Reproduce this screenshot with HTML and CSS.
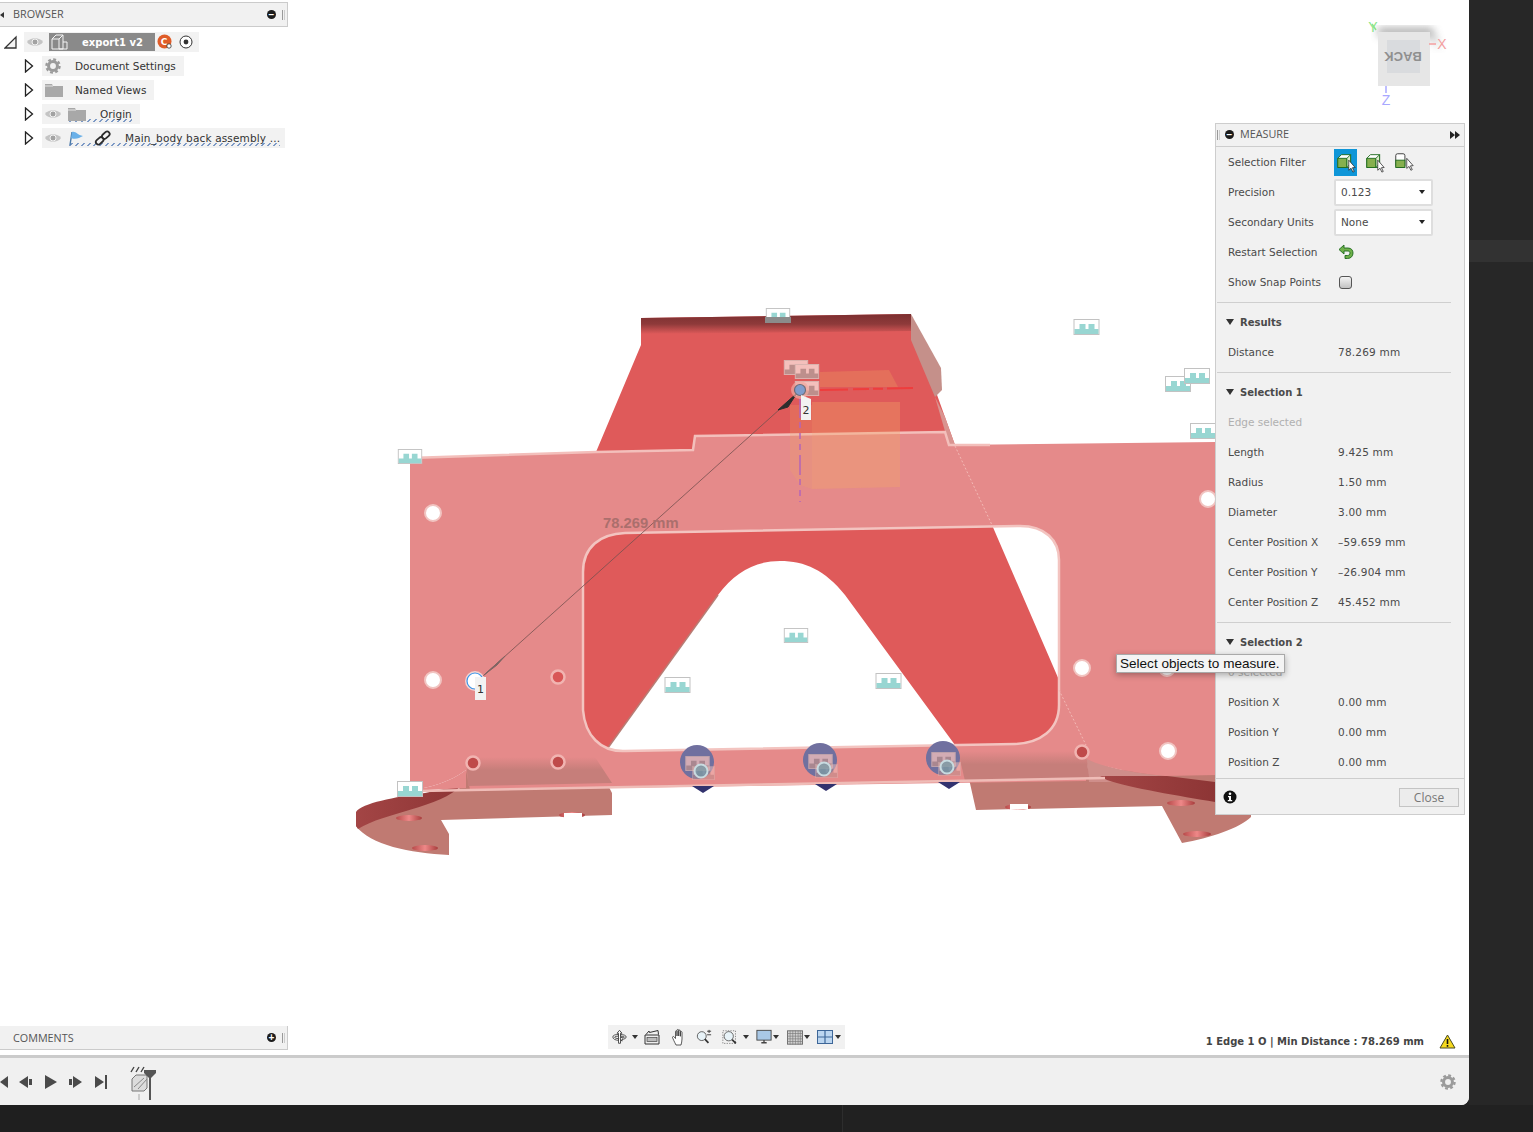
FILE: index.html
```html
<!DOCTYPE html>
<html lang="en">
<head>
<meta charset="UTF-8">
<meta name="viewport" content="width=device-width, initial-scale=1.0">
<title>Measure</title>
<link rel="stylesheet" href="styles.css">
</head>
<body>

<svg class="defs" width="0" height="0">
  <symbol id="comb" viewBox="0 0 26 16">
    <rect x="0.500" y="0.500" width="25" height="15" fill="#fff" stroke="#c2c2c2"/>
    <path d="M1 15V10H6V5H12V10H15V5H21V10H25V15Z" fill="#98d6d2"/>
  </symbol>
  <symbol id="comb-dim" viewBox="0 0 26 16">
    <rect x="0.500" y="0.500" width="25" height="15" fill="#f4c0bc" stroke="#d9b4b0"/>
    <path d="M1 15V10H6V5H12V10H15V5H21V10H25V15Z" fill="#bd8f8c"/>
  </symbol>
  <symbol id="eye" viewBox="1 1 16 10">
    <path d="M1 6C4 1 14 1 17 6C14 11 4 11 1 6Z" fill="#c4c4c4"/>
    <circle cx="9" cy="6" r="3" fill="#a2a2a2" stroke="#f2f2f2"/>
  </symbol>
  <symbol id="caret" viewBox="0 0 10 14">
    <path d="M1.500 1L8.500 7L1.500 13Z" fill="#fff" stroke="#222" stroke-width="1.300"/>
  </symbol>
  <symbol id="gear" viewBox="0 0 18 18">
    <circle cx="9" cy="9" r="5" fill="none" stroke="#9b9b9b" stroke-width="3.400"/>
    <circle cx="9" cy="9" r="7.400" fill="none" stroke="#9b9b9b" stroke-width="2.600" stroke-dasharray="3.200 2.610"/>
  </symbol>
  <symbol id="folder" viewBox="0 0 18 14">
    <path d="M0 1H7L8 3H18V14H0Z" fill="#a8a8a8"/>
    <path d="M0 3H8" stroke="#e4e4e4"/>
  </symbol>
  <symbol id="pick-cube" viewBox="0 0 24 24">
    <path d="M3 8L7 4H17V18H3Z" fill="#fff" stroke="#1f6b1f"/>
    <path d="M3 8H13V18H3Z" fill="#86b04e" stroke="#1f6b1f"/>
    <path d="M13 8L17 4V14L13 18Z" fill="#dfeccb" stroke="#1f6b1f"/>
    <path d="M15 10V21L17.500 18.800L19.500 23L21 22.300L19 18.200L22 18Z" fill="#fff" stroke="#222" stroke-width=".8"/>
  </symbol>
</svg>

<div class="desk">
  <div class="app">
    <div class="viewport">

      <svg class="model" width="1469" height="1055" viewBox="0 0 1469 1055">
        <defs>
          <linearGradient id="roll" x1="0" y1="0" x2="0" y2="1">
            <stop offset="0" stop-color="#7c2f30"/>
            <stop offset=".5" stop-color="#8e3a3a"/>
            <stop offset="1" stop-color="#df5a5a"/>
          </linearGradient>
          <linearGradient id="bend" x1="0" y1="0" x2="0" y2="1">
            <stop offset="0" stop-color="#e58a8a"/>
            <stop offset=".45" stop-color="#c67e7a"/>
            <stop offset="1" stop-color="#c67e7a"/>
          </linearGradient>
          <linearGradient id="bolt" x1="0" y1="0" x2="1" y2="0">
            <stop offset="0" stop-color="#b84a4a"/>
            <stop offset=".5" stop-color="#e88"/>
            <stop offset="1" stop-color="#a83c3c"/>
          </linearGradient>
          <linearGradient id="band" x1="0" y1="0" x2="1" y2="0">
            <stop offset="0" stop-color="#a34545"/>
            <stop offset="1" stop-color="#8d3535"/>
          </linearGradient>
          <filter id="soft"><feGaussianBlur stdDeviation="4"/></filter>
          <filter id="fine"><feGaussianBlur stdDeviation=".5"/></filter>
        </defs>

        <!-- feet -->
        <path d="M356 826C370 845 410 853 449 855V834L441 820L612 815V793L595 760H466V785C440 800 380 805 356 826Z" fill="#c07a72"/>
        <path d="M356 812C362 803 395 797 425 793L462 785C440 808 385 812 358 829L356 826Z" fill="url(#band)"/>
        <path d="M967 770L976 810L1162 806L1182 843C1210 838 1240 828 1251 817V805L1215 790V770Z" fill="#c07a72"/>
        <path d="M1086 755C1095 765 1125 772 1165 776L1107 782H1089Z" fill="#cf8e8a"/>
        <path d="M1100 776H1167L1215 782V802C1180 796 1130 788 1107 780Z" fill="url(#band)"/>
        <g fill="url(#bolt)">
          <ellipse cx="409" cy="818" rx="13" ry="3"/>
          <ellipse cx="425" cy="848" rx="13" ry="3"/>
          <ellipse cx="1181" cy="803" rx="14" ry="3"/>
          <ellipse cx="1197" cy="834" rx="14" ry="3"/>
          <ellipse cx="572" cy="815" rx="13" ry="3"/>
          <ellipse cx="1018" cy="807" rx="13" ry="3"/>
        </g>
        <path d="M564 819V813H582V818Z" fill="#fff"/>
        <path d="M1010 810V804H1028V809Z" fill="#fff"/>

        <!-- back wall -->
        <path d="M641 318L911 314V331L936 392L955 445L992 525L1059 680V745H955L845 595C825 570 805 561 780 561C755 561 735 572 718 595L605 752H584V560L596 452L641 345Z" fill="#df5a5a"/>
        <path d="M641 318L911 314V331L641 334Z" fill="url(#roll)"/>
        <path d="M911 314L941 368L942 390L935 397L911 340Z" fill="#c5908a"/>
        <path d="M935 397L945 417L955 445L949 445Z" fill="#d99490"/>
        <path d="M605 752L718 595" stroke="#b87c74" stroke-width="1.500" fill="none"/>

        <!-- front plate -->
        <path fill-rule="evenodd" fill="#e58a8a" d="M410 458L596 452L693 450L695 436L945 432L949 445L1215 442V775L1165 776C1125 772 1095 765 1086 758V781L470 790L466 770C450 782 430 788 410 790ZM583 572C583 547 600 534 625 533L1020 526C1045 526 1059 540 1059 560V705C1059 730 1040 743 1015 744L625 751C600 752 585 735 583 710Z"/>
        <path d="M466 757H595L612 783L468 786Z" fill="url(#bend)"/>
        <path d="M958 751H1086L1089 778L965 781Z" fill="url(#bend)"/>
        <path d="M466 770C450 782 430 788 410 790V791L466 788Z" fill="#e58a8a"/>
        <path d="M420 791L1105 778" stroke="#efbcb7" stroke-width="2.500" fill="none"/>
        <path d="M410 458L596 452L693 450L695 436L945 432L949 445H990" stroke="#f3bfbb" stroke-width="2.500" fill="none"/>
        <path d="M583 572C583 547 600 534 625 533L1020 526C1045 526 1059 540 1059 560V705C1059 730 1040 743 1015 744L625 751C600 752 585 735 583 710Z" stroke="#f3c4c0" stroke-width="2.500" fill="none"/>
        <path d="M955 446L992 525M1059 690L1086 745" stroke="#f3b9b5" stroke-width="1" stroke-dasharray="2 2" fill="none"/>

        <!-- plate holes -->
        <g fill="#fff" stroke="#f1c4c1" stroke-width="2">
          <ellipse cx="433" cy="513" rx="8" ry="8"/>
          <ellipse cx="433" cy="680" rx="8" ry="8"/>
          <ellipse cx="1208" cy="499" rx="8" ry="8"/>
          <ellipse cx="1082" cy="668" rx="8" ry="8"/>
          <ellipse cx="1168" cy="751" rx="8" ry="8"/>
          <ellipse cx="1167" cy="668" rx="8" ry="8"/>
        </g>
        <g fill="#d95757" stroke="#f1b4b1" stroke-width="2.500">
          <circle cx="558" cy="677" r="6.500"/>
          <circle cx="473" cy="763" r="6.500" fill="#bf4a4a"/>
          <circle cx="558" cy="762" r="6.500" fill="#bf4a4a"/>
          <circle cx="1082" cy="752" r="6.500" fill="#bf4a4a"/>
        </g>

        <!-- helper box -->
        <path d="M820 372L889 370L898 387L820 387Z" fill="#ef9a5c" opacity=".32"/>
        <path d="M812 402H900V487L812 489Z" fill="#f3a766" opacity=".35"/>
        <path d="M790 405H812V489L800 485L790 470Z" fill="#f3a766" opacity=".22"/>
        <path d="M820 390L913 388" stroke="#ee3d3d" stroke-width="2" stroke-dasharray="28 5 16 4 10 4" fill="none"/>
        <path d="M800 398V502" stroke="#b364b8" stroke-width="2" stroke-dasharray="20 4 6 5 6 5 6 5" fill="none" opacity=".75"/>

        <!-- bolts -->
        <g>
          <path d="M692 786H714L703 793Z" fill="#32326e"/>
          <path d="M815 784H837L826 791Z" fill="#32326e"/>
          <path d="M938 782H960L949 789Z" fill="#32326e"/>
          <circle cx="697" cy="762" r="17" fill="#70709f"/>
          <circle cx="820" cy="760" r="17" fill="#70709f"/>
          <circle cx="943" cy="758" r="17" fill="#70709f"/>
          <use href="#comb-dim" x="685" y="756" width="25" height="15" opacity=".75"/>
          <use href="#comb-dim" x="808" y="754" width="25" height="15" opacity=".75"/>
          <use href="#comb-dim" x="931" y="752" width="25" height="15" opacity=".75"/>
          <use href="#comb-dim" x="691" y="766" width="25" height="14" opacity=".5"/>
          <use href="#comb-dim" x="814" y="764" width="25" height="14" opacity=".5"/>
          <use href="#comb-dim" x="937" y="762" width="25" height="14" opacity=".5"/>
          <circle cx="701" cy="771" r="6.500" fill="#6d98a6" fill-opacity=".7" stroke="#c8dbe0" stroke-width="2"/>
          <circle cx="824" cy="769" r="6.500" fill="#6d98a6" fill-opacity=".7" stroke="#c8dbe0" stroke-width="2"/>
          <circle cx="947" cy="767" r="6.500" fill="#6d98a6" fill-opacity=".7" stroke="#c8dbe0" stroke-width="2"/>
        </g>

        <!-- sketch markers -->
        <use href="#comb" x="1073" y="319" width="27" height="16"/>
        <use href="#comb" x="1165" y="376" width="26" height="16"/>
        <use href="#comb" x="1184" y="368" width="26" height="16"/>
        <use href="#comb" x="1190" y="423" width="26" height="16"/>
        <use href="#comb" x="397" y="449" width="26" height="15"/>
        <use href="#comb" x="397" y="781" width="26" height="16"/>
        <use href="#comb" x="783" y="628" width="26" height="15"/>
        <use href="#comb" x="664" y="677" width="27" height="16"/>
        <use href="#comb" x="875" y="673" width="27" height="16"/>
        <use href="#comb" x="765" y="308" width="26" height="15"/>
        <rect x="765" y="317" width="26" height="6" fill="#8b8b8b"/>
        <use href="#comb-dim" x="783" y="360" width="26" height="15"/>
        <use href="#comb-dim" x="794" y="364" width="26" height="15"/>
        <use href="#comb-dim" x="794" y="381" width="26" height="15"/>

        <!-- measure line -->
        <path d="M483 676L800 391" stroke="#75514f" stroke-width=".8" fill="none"/>
        <path d="M484 675L505 656L497 665Z" fill="#7f6563" stroke="#7f6563"/>
        <path d="M778 410L797 393L788 407Z" fill="#2d2d2d" stroke="#2d2d2d"/>
        <circle cx="800" cy="390" r="9" fill="#f0a8a0" opacity=".7"/>
        <circle cx="800" cy="390" r="5.500" fill="#7f9ccc" stroke="#6d6d78" stroke-width="1.200"/>
        <circle cx="475" cy="681" r="10" fill="#f3d4d2"/>
        <circle cx="475" cy="681" r="8" fill="#fff" stroke="#3b95e8" stroke-width="1.200"/>
        <rect x="475" y="677" width="11" height="23" fill="#f2f2f2"/>
        <text class="pin-label" x="480.500" y="693">1</text>
        <path d="M801 395L811 399V420H801Z" fill="#f2f2f2"/>
        <text class="pin-label" x="806" y="414">2</text>
        <text class="dim-label" x="603" y="528">78.269 mm</text>

        <!-- view cube -->
        <path d="M1378 28H1432L1440 50L1430 36H1378Z" fill="#888" opacity=".75" filter="url(#soft)"/>
        <rect x="1378" y="32" width="52" height="54" fill="#e6e6e6" filter="url(#fine)"/>
        <rect x="1387" y="40" width="33" height="33" fill="#d9dbde"/>
        <text class="cube-label" transform="rotate(180 1403 56)" x="1403" y="60.500">BACK</text>
        <path d="M1376 30L1372 24" stroke="#8be58b" stroke-width="1.500"/>
        <path d="M1429 44H1436" stroke="#f49f9f" stroke-width="1.500"/>
        <path d="M1386 86V93" stroke="#a8a8ff" stroke-width="1.500"/>
        <text class="axis axis-y" x="1373" y="32">Y</text>
        <text class="axis axis-x" x="1442" y="49">X</text>
        <text class="axis axis-z" x="1386" y="105">Z</text>
      </svg>

      <div class="browser">
        <div class="dock-head">
          <span class="dock-pin"></span>
          <span class="dock-title">BROWSER</span>
          <span class="dock-btn">&#8722;</span>
          <span class="dock-grip"></span>
        </div>
        <div class="tree">
          <div class="tree-row tree-root">
            <svg class="tree-caret" width="14" height="14" viewBox="0 0 14 14"><path d="M1 13L12 2V13Z" fill="#f4f4f4" stroke="#333" stroke-width="1.300"/></svg>
            <div class="tree-chip root-chip">
              <svg class="icon-eye" width="16" height="10"><use href="#eye"/></svg>
              <div class="doc-name">
                <svg width="18" height="16" viewBox="0 0 18 16"><path d="M1 5L5 1H12V15H1ZM1 5H8V15M8 5L12 1M12 8H16V15H8" fill="none" stroke="#f4f4f4"/></svg>
                <span>export1 v2</span>
              </div>
              <svg width="16" height="16" viewBox="0 0 16 16"><circle cx="7.500" cy="7.500" r="7" fill="#df5c28"/><text class="badge-c" x="7" y="11">C</text><circle cx="12" cy="12" r="2.200" fill="#fff" stroke="#333" stroke-width=".8"/></svg>
              <svg width="14" height="14" viewBox="0 0 14 14"><circle cx="7" cy="7" r="6" fill="#fff" stroke="#333"/><circle cx="7" cy="7" r="2.400" fill="#333"/></svg>
            </div>
          </div>
          <div class="tree-row">
            <svg class="tree-caret" width="10" height="14"><use href="#caret"/></svg>
            <div class="tree-chip">
              <svg class="gear-slot" width="16" height="16"><use href="#gear"/></svg>
              <span>Document Settings</span>
            </div>
          </div>
          <div class="tree-row">
            <svg class="tree-caret" width="10" height="14"><use href="#caret"/></svg>
            <div class="tree-chip">
              <svg class="folder-slot" width="18" height="14"><use href="#folder"/></svg>
              <span>Named Views</span>
            </div>
          </div>
          <div class="tree-row">
            <svg class="tree-caret" width="10" height="14"><use href="#caret"/></svg>
            <div class="tree-chip">
              <svg class="icon-eye" width="16" height="10"><use href="#eye"/></svg>
              <div class="squiggle squiggle-origin">
                <svg width="18" height="14"><use href="#folder"/></svg>
                <span>Origin</span>
              </div>
            </div>
          </div>
          <div class="tree-row">
            <svg class="tree-caret" width="10" height="14"><use href="#caret"/></svg>
            <div class="tree-chip chip-wide">
              <svg class="icon-eye" width="16" height="10"><use href="#eye"/></svg>
              <div class="squiggle squiggle-main">
                <svg width="18" height="16" viewBox="0 0 18 16"><path d="M2 15L4 2" stroke="#4a7aa8" stroke-width="1.400"/><path d="M4 2C8 1 9 5 15 6C11 8 8 10 3 8Z" fill="#6ab0e8"/></svg>
                <svg width="18" height="16" viewBox="0 0 18 16"><g fill="none" stroke="#2b2b2b" stroke-width="1.800"><rect x="-4" y="-2.500" width="8.500" height="5" rx="2.500" transform="translate(5.500 11) rotate(-42)"/><rect x="-4.500" y="-2.500" width="8.500" height="5" rx="2.500" transform="translate(12 5) rotate(-42)"/></g></svg>
                <span class="main-name">Main_body back assembly ...</span>
              </div>
            </div>
          </div>
        </div>
      </div>

      <div class="measure">
        <div class="measure-head">
          <span class="dock-grip"></span>
          <span class="dock-btn">&#8722;</span>
          <span class="measure-title">MEASURE</span>
          <svg class="measure-fwd" width="10" height="8" viewBox="0 0 10 8"><path d="M0 0L5 4L0 8ZM5 0L10 4L5 8Z" fill="#222"/></svg>
        </div>

        <div class="m-row">
          <span class="m-label">Selection Filter</span>
          <div class="filters">
            <span class="filter filter-on"><svg width="22" height="22"><use href="#pick-cube"/></svg></span>
            <span class="filter"><svg width="22" height="22"><use href="#pick-cube"/></svg></span>
            <span class="filter"><svg width="22" height="22" viewBox="0 0 24 24"><rect x="3" y="3" width="10" height="15" rx="2" fill="#fff" stroke="#333"/><rect x="3" y="10" width="10" height="8" fill="#86b04e" stroke="#1f6b1f"/><path d="M15 8V19L17.500 16.800L19.500 21L21 20.300L19 16.200L22 16Z" fill="#fff" stroke="#222" stroke-width=".8"/></svg></span>
          </div>
        </div>
        <div class="m-row">
          <span class="m-label">Precision</span>
          <div class="dropdown"><span>0.123</span><i class="drop-arrow"></i></div>
        </div>
        <div class="m-row">
          <span class="m-label">Secondary Units</span>
          <div class="dropdown"><span>None</span><i class="drop-arrow"></i></div>
        </div>
        <div class="m-row">
          <span class="m-label">Restart Selection</span>
          <svg width="16" height="16" viewBox="0 0 16 16"><path d="M1 5.500L6 1V4H10C13.500 4 15 6.500 15 9C15 12 13 14.500 9.500 14.500H7V11.500H9.500C11 11.500 12 10.500 12 9C12 7.800 11 7 10 7H6V10Z" fill="#6fb04a" stroke="#1d6a1d" stroke-width=".9"/></svg>
        </div>
        <div class="m-row">
          <span class="m-label">Show Snap Points</span>
          <span class="checkbox"></span>
        </div>
        <div class="m-rule"></div>

        <div class="m-row m-section"><i class="sec-arrow"></i>Results</div>
        <div class="m-row"><span class="m-label">Distance</span><span class="m-value">78.269 mm</span></div>
        <div class="m-rule"></div>

        <div class="m-row m-section"><i class="sec-arrow"></i>Selection 1</div>
        <div class="m-row m-muted">Edge selected</div>
        <div class="m-row"><span class="m-label">Length</span><span class="m-value">9.425 mm</span></div>
        <div class="m-row"><span class="m-label">Radius</span><span class="m-value">1.50 mm</span></div>
        <div class="m-row"><span class="m-label">Diameter</span><span class="m-value">3.00 mm</span></div>
        <div class="m-row"><span class="m-label">Center Position X</span><span class="m-value">&#8211;59.659 mm</span></div>
        <div class="m-row"><span class="m-label">Center Position Y</span><span class="m-value">&#8211;26.904 mm</span></div>
        <div class="m-row"><span class="m-label">Center Position Z</span><span class="m-value">45.452 mm</span></div>
        <div class="m-rule"></div>

        <div class="m-row m-section"><i class="sec-arrow"></i>Selection 2</div>
        <div class="m-row m-muted">0 selected</div>
        <div class="m-row"><span class="m-label">Position X</span><span class="m-value">0.00 mm</span></div>
        <div class="m-row"><span class="m-label">Position Y</span><span class="m-value">0.00 mm</span></div>
        <div class="m-row"><span class="m-label">Position Z</span><span class="m-value">0.00 mm</span></div>

        <div class="measure-foot">
          <svg width="14" height="14" viewBox="0 0 14 14"><circle cx="7" cy="7" r="6.500" fill="#111"/><circle cx="7" cy="3.800" r="1.300" fill="#fff"/><path d="M5 6H8V10H9.200V11.300H4.800V10H6V7.200H5Z" fill="#fff"/></svg>
          <button class="close-btn" type="button">Close</button>
        </div>
      </div>

      <div class="tooltip">Select objects to measure.</div>

      <div class="bottom-bar">
        <div class="dock-head comments">
          <span class="dock-title">COMMENTS</span>
          <span class="dock-btn">+</span>
          <span class="dock-grip"></span>
        </div>

        <div class="nav-tools">
          <svg width="15" height="18" viewBox="0 0 18 18"><g fill="#fff" stroke="#333" stroke-width="1"><path d="M9 1L12 4.500H10.200V16.500H7.800V4.500H6Z"/><path d="M1 9C1 6.800 4 6 7.800 6V8C5 8 3.500 8.400 3 9.200C3.400 10.200 5 10.800 7.800 11V13C4 12.800 1 11.400 1 9ZM10.200 6C14 6.200 17 7 17 9C17 10.500 15 11.500 12 12V14L9.800 11L12 8.800V10.400C13.500 10 14.800 9.600 15 9C14.800 8.400 13 8 10.200 8Z"/></g></svg>
          <i class="tool-arrow arrow-wide"></i>
          <svg class="gap-6" width="16" height="16" viewBox="0 0 16 16"><path d="M1 6V15H15V6Z" fill="#eee" stroke="#333"/><rect x="3" y="8.500" width="10" height="4" fill="#bbb" stroke="#444" stroke-width=".7"/><path d="M2 5.500L5 2L5.500 3.500L14 1.500L14.500 5.500" fill="none" stroke="#333"/></svg>
          <svg class="gap-10" width="16" height="18" viewBox="0 0 13 18"><path d="M4.500 17C3 14 1.500 11 1 9.500C.8 8.500 2 8 2.800 9L4 10.500V3.500C4 2.500 5.500 2.500 5.500 3.500V8V2.200C5.500 1.200 7.200 1.200 7.200 2.200V8V2.800C7.200 1.800 8.900 1.800 8.900 2.800V8.300V4.200C8.900 3.300 10.500 3.300 10.500 4.200V11C10.500 13 10 15 9.500 17Z" fill="#fff" stroke="#333" stroke-width=".8"/></svg>
          <svg class="gap-10" width="16" height="16" viewBox="0 0 18 16"><circle cx="6.500" cy="7" r="5" fill="#e8f3f8" stroke="#555"/><path d="M10 10.500L14 14.500" stroke="#333" stroke-width="2"/><path d="M12.500 1.500H17M14.700 0V3.500M12.500 5.500H17" stroke="#333"/></svg>
          <svg class="gap-10" width="16" height="17" viewBox="0 0 19 18"><rect x="1" y="1" width="15" height="15" fill="none" stroke="#777" stroke-dasharray="1.500 1.500"/><circle cx="8" cy="7.500" r="5.500" fill="#e8f3f8" stroke="#555"/><path d="M12 11.500L16.500 16" stroke="#333" stroke-width="2"/></svg>
          <i class="tool-arrow arrow-wide"></i>
          <svg class="gap-7" width="16" height="16" viewBox="0 0 18 17"><rect x="1" y="1" width="16" height="11" fill="#a9c8e6" stroke="#444"/><path d="M6 15H12M9 12V15" stroke="#444" stroke-width="1.500"/></svg>
          <i class="tool-arrow"></i>
          <svg class="gap-8" width="16" height="15" viewBox="0 0 18 16"><rect x=".5" y=".5" width="17" height="15" fill="#d0d0d0" stroke="#666"/><path d="M3.500 0V16M6.500 0V16M9.500 0V16M12.500 0V16M15 0V16M0 3.500H18M0 6.500H18M0 9.500H18M0 12.500H18" stroke="#777" stroke-width=".7"/></svg>
          <i class="tool-arrow"></i>
          <svg class="gap-7" width="16" height="14" viewBox="0 0 16 14"><rect x=".5" y=".5" width="15" height="13" fill="#bcd6f0" stroke="#3d6698"/><path d="M8 0V14M0 7H16" stroke="#3d6698" stroke-width="1.200"/></svg>
          <i class="tool-arrow arrow-last"></i>
        </div>

        <div class="status">
          <span>1 Edge 1 O | Min Distance : 78.269 mm</span>
          <svg width="17" height="15" viewBox="0 0 17 15"><path d="M8.500 1L16 14H1Z" fill="#f6d91e" stroke="#4a4a20"/><path d="M8.500 5V10M8.500 11V12.800" stroke="#111" stroke-width="1.600"/></svg>
        </div>
      </div>
    </div>

    <div class="timeline">
      <svg width="112" height="18" viewBox="0 0 112 18">
        <g fill="#4a4a4a">
          <path d="M0 9L8 3V15Z"/>
          <path d="M19 9L28 3V15ZM29 6H32V12H29Z"/>
          <path d="M45 2L57 9L45 16Z"/>
          <path d="M69 6H72V12H69ZM73 3L82 9L73 15Z"/>
          <path d="M95 3L104 9L95 15ZM105 2H107V16H105Z"/>
        </g>
      </svg>
      <svg class="feature" width="30" height="36" viewBox="0 0 30 36">
        <path d="M1 8L4 3M6 8L9 3M11 8L14 3" stroke="#444" stroke-width="1.400"/>
        <path d="M2 15L6 11H17V24L14 27H2Z" fill="#dcdcdc" stroke="#777"/>
        <path d="M4 23L14 14M8 25L17 15" stroke="#888" fill="none"/>
        <rect x="8" y="30" width="2" height="6" fill="#ccc"/>
        <path d="M14 6H26V9L21 14L19 14L14 9Z" fill="#555"/>
        <rect x="19" y="12" width="2" height="24" fill="#555"/>
      </svg>
      <svg class="timeline-gear" width="16" height="16" viewBox="0 0 18 18"><use href="#gear"/></svg>
    </div>
  </div>

  <div class="side">
    <div class="side-band"></div>
  </div>
</div>

<div class="dock">
  <div class="dock-left"></div>
  <div class="dock-right"></div>
</div>

</body>
</html>
```

FILE: styles.css
```css
html, body {
  margin: 0;
  padding: 0;
}

body {
  width: 1533px;
  height: 1132px;
  overflow: hidden;
  background-color: #232323;
  font-family: "DejaVu Sans", sans-serif;
  font-size: 10.5px;
  color: #4a4a4a;
}

.defs {
  position: absolute;
}

.desk {
  display: flex;
  height: 1105px;
}

.app {
  width: 1469px;
  height: 1105px;
  display: flex;
  flex-direction: column;
  background-color: #fff;
  border-bottom-right-radius: 8px;
  overflow: hidden;
}

.viewport {
  position: relative;
  height: 1055px;
}

.model {
  position: absolute;
  top: 0;
  left: 0;
}

.side {
  flex: 1;
  padding-top: 240px;
  background-color: #272727;
}

.side-band {
  height: 22px;
  background-color: #323232;
}

.dock {
  display: flex;
  height: 27px;
}

.dock-left {
  width: 842px;
  background-color: #1f1f1f;
  border-right: 1px solid #2d2d2d;
}

.dock-right {
  flex: 1;
  background-color: #212121;
}

/* svg labels */
.pin-label {
  font-size: 11px;
  fill: #333;
  text-anchor: middle;
}

.dim-label {
  font-family: "Liberation Sans", sans-serif;
  font-size: 14.8px;
  font-weight: bold;
  fill: #ab6f6d;
}

.cube-label {
  font-family: "Liberation Sans", sans-serif;
  font-size: 13px;
  font-weight: bold;
  fill: #8f8f8f;
  text-anchor: middle;
}

.axis {
  font-family: "Liberation Sans", sans-serif;
  font-size: 14px;
  text-anchor: middle;
}

.axis-x { fill: #f49f9f; }
.axis-y { fill: #8be58b; }
.axis-z { fill: #a8a8ff; }

.badge-c {
  font-size: 9px;
  font-weight: bold;
  fill: #fff;
  text-anchor: middle;
}

/* dock headers */
.dock-head {
  display: flex;
  align-items: center;
  height: 23px;
  background-color: #f1f1f1;
  border: 1px solid #cbcbcb;
  border-left: none;
  box-sizing: content-box;
}

.dock-title {
  flex: 1;
  padding-left: 13px;
  padding-bottom: 1px;
  font-family: "Open Sans", sans-serif;
  font-size: 10.8px;
  color: #555;
}

.browser .dock-title {
  padding-bottom: 3px;
}

.dock-pin {
  position: absolute;
  top: 10px;
  left: 0;
  border: 3px solid transparent;
  border-left: none;
  border-right: 4px solid #333;
}

.dock-btn {
  width: 9px;
  height: 9px;
  border-radius: 50%;
  background-color: #1c1c1c;
  color: #fff;
  font-family: "Liberation Sans", sans-serif;
  font-size: 10px;
  font-weight: bold;
  line-height: 9px;
  text-align: center;
}

.dock-grip {
  width: 1px;
  height: 10px;
  margin: 0 2px 0 6px;
  border-left: 1px solid #999;
  border-right: 1px solid #ccc;
}

.browser {
  position: absolute;
  top: 2px;
  left: 0;
  width: 288px;
}

.tree {
  display: flex;
  flex-direction: column;
  gap: 4px;
  padding-top: 5px;
}

.tree-row {
  display: flex;
  align-items: center;
  height: 20px;
  padding-left: 24px;
}

.tree-caret {
  flex: none;
  width: 10px;
  margin-right: 8px;
}

.tree-chip {
  display: flex;
  align-items: center;
  height: 20px;
  padding: 0 8px 0 3px;
  background-color: #f2f2f2;
  white-space: nowrap;
  color: #333;
}

.chip-wide {
  padding-right: 5px;
}

.tree-root {
  padding-left: 4px;
}

.tree-root .tree-caret {
  width: 14px;
  margin-right: 6px;
}

.root-chip {
  padding: 0 6px 0 3px;
}

.root-chip .icon-eye {
  margin-right: 6px;
}

.root-chip svg:last-child {
  margin-left: 6px;
}

.doc-name {
  display: flex;
  align-items: center;
  gap: 13px;
  width: 106px;
  height: 18px;
  margin-right: 2px;
  box-sizing: border-box;
  padding-left: 2px;
  background-color: #8a8a8a;
  color: #fff;
  font-size: 10px;
  font-weight: bold;
}

.gear-slot {
  margin-right: 14px;
}

.folder-slot {
  margin-right: 12px;
}

.icon-eye {
  margin-right: 7px;
}

.squiggle {
  display: flex;
  align-items: center;
  height: 20px;
  background-image: linear-gradient(135deg, transparent 35%, #7d9ac6 35%, #7d9ac6 65%, transparent 65%);
  background-size: 6px 3px;
  background-repeat: repeat-x;
  background-position: 0 15px;
}

.squiggle-origin {
  gap: 14px;
}

.squiggle-main {
  gap: 8px;
}

.main-name {
  margin-left: 5px;
  letter-spacing: 0.15px;
}

/* measure panel */
.measure {
  position: absolute;
  top: 123px;
  left: 1215px;
  width: 250px;
  height: 692px;
  box-sizing: border-box;
  background-color: #f1f1f1;
  border: 1px solid #cdcdcd;
}

.measure-head {
  display: flex;
  align-items: center;
  height: 21px;
  padding-bottom: 1px;
  box-sizing: content-box;
  border-bottom: 1px solid #cdcdcd;
}

.measure-head .dock-grip {
  margin: 0 5px 0 1px;
}

.measure-title {
  flex: 1;
  padding-left: 6px;
  padding-bottom: 3px;
  font-family: "Open Sans", sans-serif;
  font-size: 10.8px;
  color: #555;
}

.measure-fwd {
  margin-right: 4px;
}

.m-row {
  display: flex;
  align-items: center;
  height: 30px;
  padding-left: 12px;
}

.m-label {
  flex: none;
  width: 110px;
  white-space: nowrap;
}

.m-value {
  letter-spacing: 0.2px;
}

.m-section {
  font-size: 10px;
  font-weight: bold;
  padding-left: 10px;
}

.sec-arrow {
  width: 0;
  margin-right: 6px;
  border: 4px solid transparent;
  border-top: 6px solid #333;
  border-bottom: none;
}

.m-muted {
  color: #b0b0b0;
}

.m-rule {
  height: 1px;
  margin: 5px 13px 4px 1px;
  background-color: #cfcfcf;
}

.filters {
  display: flex;
  gap: 6px;
  margin-left: -4px;
}

.filter {
  display: flex;
  align-items: center;
  justify-content: center;
  width: 23px;
  height: 27px;
}

.filter-on {
  background-color: #0f96d8;
}

.dropdown {
  display: flex;
  align-items: center;
  justify-content: space-between;
  width: 99px;
  height: 27px;
  margin-left: -4px;
  padding: 0 6px 0 5px;
  box-sizing: border-box;
  background-color: #fff;
  border: 2px solid #dedede;
  border-radius: 2px;
}

.drop-arrow {
  border: 3px solid transparent;
  border-top: 4px solid #222;
  border-bottom: none;
}

.checkbox {
  width: 13px;
  height: 13px;
  margin-left: 1px;
  box-sizing: border-box;
  border: 1px solid #555;
  border-radius: 3px;
  background-image: linear-gradient(#f4f4f4, #c2c2c2);
}

.measure-foot {
  display: flex;
  align-items: center;
  justify-content: space-between;
  height: 36px;
  margin-top: 1px;
  padding: 0 5px 0 7px;
  border-top: 1px solid #cdcdcd;
}

.close-btn {
  width: 60px;
  height: 19px;
  padding: 0;
  background-color: #ececec;
  border: 1px solid #c4c4c4;
  color: #777;
  font-family: "Open Sans", sans-serif;
  font-size: 12px;
}

.tooltip {
  position: absolute;
  top: 654px;
  left: 1116px;
  width: 169px;
  height: 19px;
  box-sizing: border-box;
  padding-left: 3px;
  background-color: #f4f4f4;
  border: 1px solid #a9a9a9;
  box-shadow: 0 2px 6px rgba(0, 0, 0, 0.3);
  font-family: "Liberation Sans", sans-serif;
  font-size: 13.55px;
  line-height: 17px;
  color: #111;
  white-space: nowrap;
}

/* bottom of the canvas */
.bottom-bar {
  position: absolute;
  left: 0;
  right: 0;
  top: 1025px;
  display: flex;
  align-items: flex-start;
}

.comments {
  width: 287px;
  margin-top: 1px;
  border-top: none;
}

.nav-tools {
  display: flex;
  align-items: center;
  height: 24px;
  margin-left: 320px;
  padding: 0 4px;
  background-color: #f1f1f1;
}

.tool-arrow {
  margin-left: 1px;
  border: 3px solid transparent;
  border-top: 4px solid #333;
  border-bottom: none;
}

.arrow-wide {
  margin-left: 5px;
}

.arrow-last {
  margin-left: 2px;
}

.gap-6 { margin-left: 6px; }
.gap-7 { margin-left: 7px; }
.gap-8 { margin-left: 8px; }
.gap-10 { margin-left: 10px; }

.status {
  display: flex;
  align-items: center;
  gap: 15px;
  margin-left: auto;
  padding: 9px 13px 0 0;
  font-size: 10px;
  font-weight: bold;
  color: #444;
}

/* timeline */
.timeline {
  display: flex;
  align-items: center;
  height: 47px;
  background-color: #f0f0f0;
  border-top: 3px solid #cbcbcb;
}

.feature {
  margin-left: 18px;
}

.timeline-gear {
  margin-left: auto;
  margin-right: 13px;
}
```
